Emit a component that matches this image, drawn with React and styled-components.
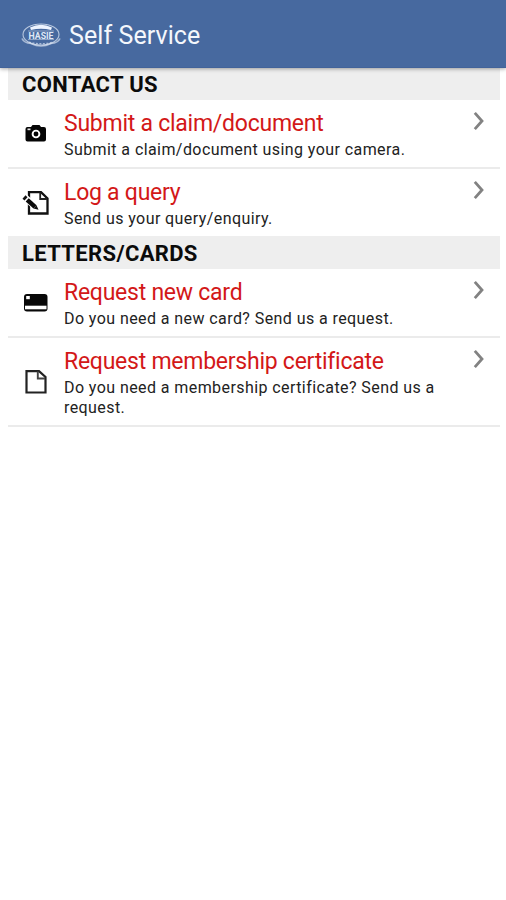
import React from "react";
import styled, { createGlobalStyle } from "styled-components";

const GlobalStyle = createGlobalStyle`
  * { box-sizing: border-box; }
  body { margin: 0; background: #fff; font-family: Roboto, "Liberation Sans", sans-serif; font-variant-ligatures: none; }
`;

const Screen = styled.div`
  min-height: 900px;
  background: #fff;
  overflow: hidden;
`;

const AppBar = styled.header`
  position: relative;
  display: flex;
  align-items: center;
  height: 68px;
  padding: 4px 0 0 21px;
  background: #47699f;
  border-bottom: 1px solid #42639a;
  box-shadow: 0 1px 4px rgba(0, 0, 0, 0.35);
`;

const AppTitle = styled.h1`
  margin: 1px 0 0 8px;
  color: #f4f7fc;
  font-size: 25px;
  font-weight: 400;
  line-height: 30px;
  letter-spacing: 0.08px;
  white-space: nowrap;
`;

const List = styled.main`
  padding: 0 6px 0 8px;
`;

const SectionTitle = styled.h2`
  display: flex;
  align-items: center;
  height: ${(p) => p.$height}px;
  margin: 0;
  padding: 1px 0 0 14px;
  background: #eee;
  color: #0b0b0b;
  font-size: 22px;
  font-weight: 700;
  letter-spacing: 0.35px;
  white-space: nowrap;
`;

const Row = styled.a`
  display: flex;
  height: ${(p) => p.$height}px;
  padding-top: 11px;
  border-bottom: ${(p) => (p.$last ? "none" : "2px solid #ebebeb")};
`;

const IconSlot = styled.span`
  flex: 0 0 56px;
  height: calc(100% + 11px);
  margin-top: -11px;
  padding-left: 14px;
  display: flex;
  align-items: center;
`;

const RowText = styled.div`
  flex: 1;
  min-width: 0;
`;

const RowTitle = styled.div`
  color: #d31818;
  font-size: 23px;
  line-height: 26px;
  letter-spacing: -0.25px;
  white-space: nowrap;
`;

const RowDetail = styled.div`
  width: 385px;
  margin-top: 3px;
  color: #222;
  font-size: 16px;
  line-height: 20px;
  letter-spacing: 0.42px;
`;

const ChevronSlot = styled.span`
  flex: 0 0 27px;
`;

const Logo = () => (
  <svg width="40" height="28" viewBox="0 0 40 28" fill="none" stroke="#dce5f3">
    <ellipse cx="20" cy="12.500" rx="18" ry="10.500" strokeWidth="1.1" opacity=".75" />
    <path d="M9 5.500Q20 0 31 5.500L30 8Q20 5.500 10 8Z" fill="#eef4ff" stroke="none" />
    <path d="M7 9H33M7 17.500H33" strokeWidth=".8" opacity=".6" />
    <text x="7.5" y="16.500" fill="#dfe8f6" stroke="none" fontSize="9" fontWeight="700" textLength="25" lengthAdjust="spacingAndGlyphs">HASIE</text>
    <path d="M1 16.500Q3 21 10 21.500Q20 26.500 30 21.500Q37 21 39 16.500" strokeWidth="1.700" opacity=".65" />
    <path d="M8 20Q20 23.500 32 20" strokeDasharray="2 1.5" strokeWidth="1.3" opacity=".65" />
  </svg>
);

const CameraIcon = () => (
  <svg width="28" height="30" viewBox="0 0 28 30">
    <path d="M5.500 8H9L10.500 6H17.500L19 8H22Q24 8 24 10V20.500Q24 22.500 22 22.500H5.500Q3.500 22.500 3.500 20.500V10Q3.500 8 5.500 8Z" fill="#050505" />
    <circle cx="14" cy="15" r="3.400" fill="none" stroke="#fff" strokeWidth="1.900" />
    <rect x="5.500" y="9.500" width="3" height="1.700" fill="#ddd" />
  </svg>
);

const EditIcon = () => (
  <svg width="28" height="30" viewBox="0 0 28 30">
    <path d="M7 4.200H19L25.500 10.500V25.500H7Z" fill="#fff" stroke="#111" strokeWidth="2.300" />
    <path d="M18.200 4.500V11H25" fill="none" stroke="#222" strokeWidth="1.800" />
    <path d="M3 9.500L12 17.500" stroke="#fff" strokeWidth="6.500" />
    <path d="M2 9L4 10.800" stroke="#111" strokeWidth="4.500" />
    <path d="M5.200 11.900L13 18.900" stroke="#0a0a0a" strokeWidth="4.600" />
    <path d="M14.500 17.200L11.500 20.500L16.500 21.800Z" fill="#111" />
  </svg>
);

const CardIcon = () => (
  <svg width="28" height="30" viewBox="0 0 28 30">
    <rect x="2" y="6" width="23.500" height="17.500" rx="3" fill="#080808" />
    <rect x="3" y="17.700" width="21.500" height="3.600" fill="#fff" />
    <rect x="4.200" y="8" width="3.600" height="3.200" fill="#fff" />
  </svg>
);

const DocumentIcon = () => (
  <svg width="28" height="30" viewBox="0 0 28 30">
    <path d="M4.500 4.200H17L23.500 10V25.500H4.500Z" fill="none" stroke="#222" strokeWidth="2.200" />
    <path d="M15.800 4.500V11.500H23" fill="none" stroke="#444" strokeWidth="1.900" />
  </svg>
);

const Chevron = () => (
  <svg width="12" height="20" viewBox="0 0 12 20">
    <path d="M1.800 1.800L9 10L1.800 18.200" fill="none" stroke="#828282" strokeWidth="2.800" />
  </svg>
);

const sections = [
  {
    title: "CONTACT US",
    height: 32,
    rows: [
      { title: "Submit a claim/document", detail: "Submit a claim/document using your camera.", Icon: CameraIcon, height: 69 },
      { title: "Log a query", detail: "Send us your query/enquiry.", Icon: EditIcon, height: 67, last: true },
    ],
  },
  {
    title: "LETTERS/CARDS",
    height: 33,
    rows: [
      { title: "Request new card", detail: "Do you need a new card? Send us a request.", Icon: CardIcon, height: 69 },
      { title: "Request membership certificate", detail: "Do you need a membership certificate? Send us a request.", Icon: DocumentIcon, height: 89 },
    ],
  },
];

export default function App() {
  return (
    <Screen>
      <GlobalStyle />
      <AppBar>
        <Logo />
        <AppTitle>Self Service</AppTitle>
      </AppBar>
      <List>
        {sections.map((section) => (
          <section key={section.title}>
            <SectionTitle $height={section.height}>{section.title}</SectionTitle>
            {section.rows.map(({ title, detail, Icon, height, last }) => (
              <Row key={title} $height={height} $last={last}>
                <IconSlot><Icon /></IconSlot>
                <RowText>
                  <RowTitle>{title}</RowTitle>
                  <RowDetail>{detail}</RowDetail>
                </RowText>
                <ChevronSlot><Chevron /></ChevronSlot>
              </Row>
            ))}
          </section>
        ))}
      </List>
    </Screen>
  );
}
